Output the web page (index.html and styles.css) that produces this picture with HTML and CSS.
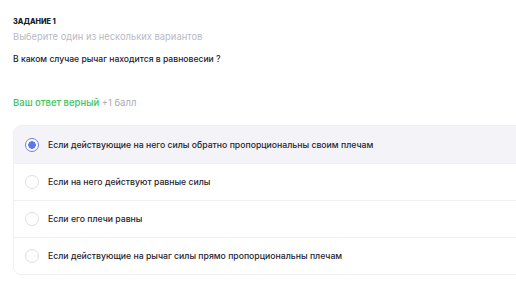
FILE: index.html
```html
<!DOCTYPE html>
<html lang="ru">
<head>
<meta charset="utf-8">
<link rel="stylesheet" href="styles.css">
</head>
<body>
<div class="task">
  <div class="task-label">ЗАДАНИЕ 1</div>
  <div class="task-hint">Выберите один из нескольких вариантов</div>
  <div class="task-question">В каком случае рычаг находится в равновесии ?</div>
  <div class="result"><span class="result-ok">Ваш ответ верный</span> <span class="result-score">+1 балл</span></div>
  <div class="options">
    <div class="option option-selected"><span class="radio radio-on"></span><span class="option-text">Если действующие на него силы обратно пропорциональны своим плечам</span></div>
    <div class="option"><span class="radio"></span><span class="option-text">Если на него действуют равные силы</span></div>
    <div class="option"><span class="radio"></span><span class="option-text">Если его плечи равны</span></div>
    <div class="option"><span class="radio"></span><span class="option-text">Если действующие на рычаг силы прямо пропорциональны плечам</span></div>
  </div>
</div>
</body>
</html>
```
FILE: styles.css
```css
html, body { margin: 0; padding: 0; background: #fff; }
body { font-family: Inter, "Noto Sans", sans-serif; color: #22222e; overflow: hidden; }
.task { padding: 17px 0 0 13px; }
.task-label { font-size: 7.3px; font-weight: 800; line-height: 10px; color: #1a1a24; }
.task-hint { margin-top: 3px; font-size: 9.4px; line-height: 14px; color: #b9b9c6; }
.task-question { margin-top: 8px; font-size: 8.6px; line-height: 14px; font-weight: 500; color: #22222e; }
.result { margin-top: 30px; font-size: 9.5px; line-height: 14px; font-weight: 500; }
.result-ok { color: #3dc45e; }
.result-score { color: #a9a9b6; font-weight: 400; }
.options { margin-top: 15px; width: 540px; border: 1px solid #efeff4; border-radius: 8px; overflow: hidden; }
.option { display: flex; align-items: center; height: 36px; padding-left: 11px; border-top: 1px solid #f0f0f4; }
.option:first-child { border-top: none; height: 37px; }
.option-selected { background: #f3f3f8; }
.radio { width: 14px; height: 14px; box-sizing: border-box; border-radius: 50%; border: 1.5px solid #dedee4; background: #fff; flex: none; }
.radio-on { border: 1.5px solid #6b7ff2; background: radial-gradient(circle, #5f74ef 0 3.5px, #fff 4px); }
.option-text { margin-left: 9px; font-size: 8.7px; line-height: 12px; font-weight: 500; color: #25252f; }
```
